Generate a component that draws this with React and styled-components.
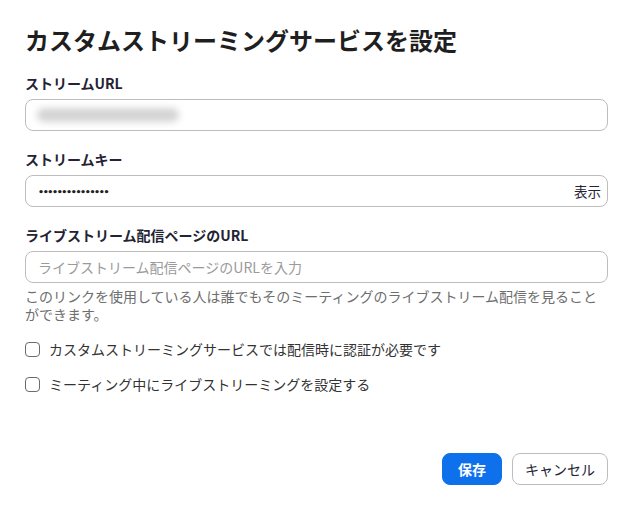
import React from "react";
import styled, { createGlobalStyle } from "styled-components";

const Global = createGlobalStyle`
  html, body { margin: 0; padding: 0; background: #fff; }
  body { font-family: "Noto Sans CJK JP", "Noto Sans", sans-serif; color: #232333; }
  * { box-sizing: border-box; }
`;

const Dialog = styled.div`
  width: 638px;
  height: 506px;
  padding: 24px 30px 0 25px;
  display: flex;
  flex-direction: column;
`;

const Title = styled.h1`
  margin: 0;
  font-size: 24px;
  line-height: 32px;
  font-weight: 700;
  color: #1f1f1f;
`;

const Field = styled.div`
  display: flex;
  flex-direction: column;
  margin-top: ${(p) => p.$top}px;
`;

const Label = styled.label`
  font-size: 14px;
  line-height: 20px;
  font-weight: 700;
  color: #232333;
  margin-bottom: 6px;
`;

const InputBox = styled.div`
  height: 32px;
  border: 1px solid #bdbdbd;
  border-radius: 8px;
  display: flex;
  align-items: center;
  padding: 0 6px 0 12px;
  font-size: 14px;
  background: #fff;
`;

const Blurred = styled.span`
  display: inline-block;
  width: 142px;
  height: 14px;
  background: #d4d4d4;
  border-radius: 7px;
  filter: blur(3.5px);
  margin-left: -1px;
`;

const Dots = styled.span`
  flex: 1;
  font-family: "DejaVu Sans", sans-serif;
  font-size: 9.5px;
  font-weight: 700;
  letter-spacing: -1.4px;
  color: #222;
`;

const Reveal = styled.span`
  font-size: 13.5px;
  color: #232333;
`;

const Placeholder = styled.span`
  color: #9a9a9a;
  font-size: 14px;
`;

const Help = styled.p`
  margin: 4px 0 0;
  font-size: 14px;
  line-height: 18px;
  color: #6e6e6e;
`;

const CheckRow = styled.label`
  display: flex;
  align-items: center;
  gap: 9px;
  height: 20px;
  margin-top: ${(p) => p.$top}px;
  font-size: 14px;
  color: #333;
`;

const Box = styled.span`
  width: 15px;
  height: 15px;
  border: 1px solid #6b6b6b;
  border-radius: 4px;
  flex: none;
`;

const Actions = styled.div`
  display: flex;
  justify-content: flex-end;
  gap: 10px;
  margin-top: 59px;
`;

const Button = styled.button`
  height: 32px;
  border-radius: 8px;
  font-family: inherit;
  font-size: 14px;
  padding: 0 ${(p) => (p.$primary ? 15 : 12)}px;
  border: 1px solid ${(p) => (p.$primary ? "#0e71eb" : "#bdbdbd")};
  background: ${(p) => (p.$primary ? "#0e71eb" : "#fff")};
  color: ${(p) => (p.$primary ? "#fff" : "#232333")};
  font-weight: ${(p) => (p.$primary ? 700 : 400)};
`;

export default function App() {
  return (
    <>
      <Global />
      <Dialog>
        <Title>カスタムストリーミングサービスを設定</Title>
        <Field $top={17}>
          <Label>ストリームURL</Label>
          <InputBox>
            <Blurred />
          </InputBox>
        </Field>
        <Field $top={18}>
          <Label>ストリームキー</Label>
          <InputBox>
            <Dots>•••••••••••••••</Dots>
            <Reveal>表示</Reveal>
          </InputBox>
        </Field>
        <Field $top={18}>
          <Label>ライブストリーム配信ページのURL</Label>
          <InputBox>
            <Placeholder>ライブストリーム配信ページのURLを入力</Placeholder>
          </InputBox>
        </Field>
        <Help>
          このリンクを使用している人は誰でもそのミーティングのライブストリーム配信を見ることができます。
        </Help>
        <CheckRow $top={16}>
          <Box />
          カスタムストリーミングサービスでは配信時に認証が必要です
        </CheckRow>
        <CheckRow $top={15}>
          <Box />
          ミーティング中にライブストリーミングを設定する
        </CheckRow>
        <Actions>
          <Button $primary>保存</Button>
          <Button>キャンセル</Button>
        </Actions>
      </Dialog>
    </>
  );
}
